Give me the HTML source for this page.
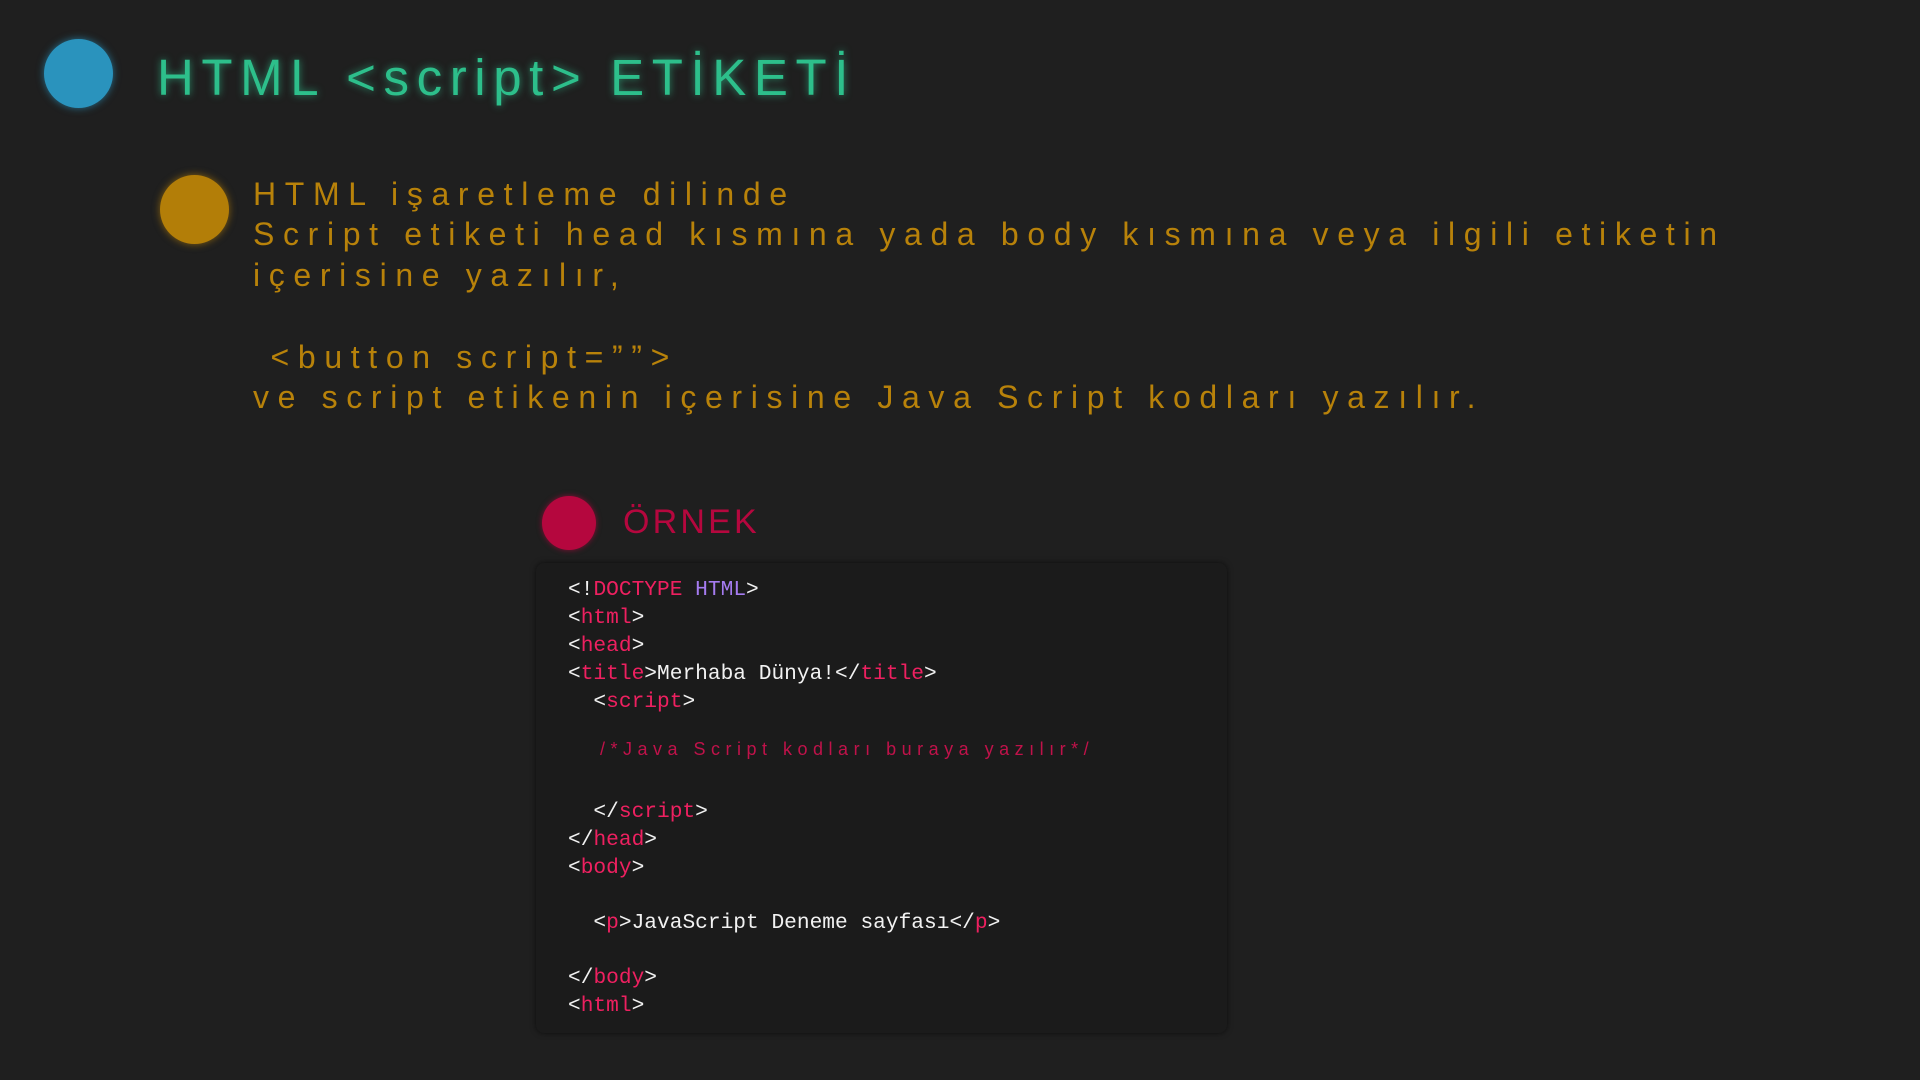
<!DOCTYPE html>
<html><head><meta charset="utf-8"><style>
html,body{margin:0;padding:0;}
body{width:1920px;height:1080px;background:#1f1f1f;position:relative;overflow:hidden;font-family:"Liberation Sans",sans-serif;}
.c{position:absolute;border-radius:50%;}
.t{position:absolute;white-space:pre;}
#title{left:157px;top:48px;font-size:51px;line-height:60px;letter-spacing:7.6px;color:#2dbf8b;text-shadow:0 0 8px rgba(45,191,139,.7);}
.p{left:253px;font-size:32px;line-height:40px;letter-spacing:8.65px;color:#b8820a;}
#ornek{left:623px;top:500px;font-size:34px;letter-spacing:3.2px;color:#b5073e;line-height:44px;}
#box{position:absolute;left:536px;top:563px;width:691px;height:470px;background:#1b1b1b;border-radius:8px;box-shadow:0 0 6px rgba(0,0,0,.6);}
.l{position:absolute;left:568px;font-family:"Liberation Mono",monospace;font-size:21.2px;line-height:28px;color:#f2f2f2;white-space:pre;}
.k{color:#ee2060;}.v{color:#a57bf0;}
</style></head><body>
<div class="c" style="left:44px;top:39px;width:69px;height:69px;background:#2a93bd;box-shadow:0 0 8px rgba(42,147,189,.7);"></div>
<div class="t" id="title">HTML &lt;script&gt; ETİKETİ</div>
<div class="c" style="left:160px;top:175px;width:69px;height:69px;background:#b37e08;box-shadow:0 0 8px rgba(179,126,8,.7);"></div>
<div class="t p" style="top:174px">HTML işaretleme dilinde</div>
<div class="t p" style="top:214px">Script etiketi head kısmına yada body kısmına veya ilgili etiketin</div>
<div class="t p" style="top:255px">içerisine yazılır,</div>
<div class="t p" style="top:337px"> &lt;button script=””&gt;</div>
<div class="t p" style="top:377px">ve script etikenin içerisine Java Script kodları yazılır.</div>
<div class="c" style="left:542px;top:496px;width:54px;height:54px;background:#b5073e;box-shadow:0 0 6px rgba(181,7,62,.7);"></div>
<div class="t" id="ornek">ÖRNEK</div>
<div id="box"></div>
<div class="l" style="top:576px">&lt;!<span class="k">DOCTYPE</span> <span class="v">HTML</span>&gt;</div>
<div class="l" style="top:604px">&lt;<span class="k">html</span>&gt;</div>
<div class="l" style="top:632px">&lt;<span class="k">head</span>&gt;</div>
<div class="l" style="top:660px">&lt;<span class="k">title</span>&gt;Merhaba Dünya!&lt;/<span class="k">title</span>&gt;</div>
<div class="l" style="top:688px">  &lt;<span class="k">script</span>&gt;</div>
<div class="t" style="left:600px;top:736px;font-size:18px;letter-spacing:5.5px;color:#c0124a;line-height:26px;">/*Java Script kodları buraya yazılır*/</div>
<div class="l" style="top:798px">  &lt;/<span class="k">script</span>&gt;</div>
<div class="l" style="top:826px">&lt;/<span class="k">head</span>&gt;</div>
<div class="l" style="top:854px">&lt;<span class="k">body</span>&gt;</div>
<div class="l" style="top:909px">  &lt;<span class="k">p</span>&gt;JavaScript Deneme sayfası&lt;/<span class="k">p</span>&gt;</div>
<div class="l" style="top:964px">&lt;/<span class="k">body</span>&gt;</div>
<div class="l" style="top:992px">&lt;<span class="k">html</span>&gt;</div>
</body></html>
